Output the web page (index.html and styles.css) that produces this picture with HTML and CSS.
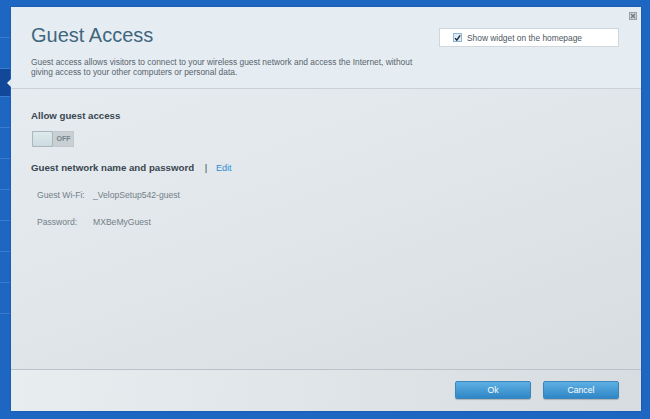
FILE: index.html
```html
<!DOCTYPE html>
<html lang="en">
<head>
    <meta charset="UTF-8">
    <title>Guest Access</title>
    <link rel="stylesheet" href="styles.css">
</head>
<body>
    <div class="page">
        <nav class="sidebar">
            <div class="nav-item"></div>
            <div class="nav-item"></div>
            <div class="nav-item active"></div>
            <div class="nav-item"></div>
            <div class="nav-item"></div>
            <div class="nav-item"></div>
            <div class="nav-item"></div>
            <div class="nav-item"></div>
            <div class="nav-item"></div>
            <div class="nav-item"></div>
        </nav>

        <div class="modal">
            <button class="close" aria-label="Close">
                <svg width="8" height="8" viewBox="0 0 8 8"><rect x="0.5" y="0.5" width="7" height="7" fill="#c9d1d6" stroke="#98a3aa"/><path d="M2 2L6 6M6 2L2 6" stroke="#6d7a83" stroke-width="1.2"/></svg>
            </button>

            <header class="modal-header">
                <div class="intro">
                    <h1>Guest Access</h1>
                    <p>Guest access allows visitors to connect to your wireless guest network and access the Internet, without giving access to your other computers or personal data.</p>
                </div>
                <label class="widget-box">
                    <span class="check">
                        <svg width="10" height="10" viewBox="0 0 10 10"><path d="M1.5 5.2L4 8L8.8 1.2" fill="none" stroke="#1b2530" stroke-width="2"/></svg>
                    </span>
                    Show widget on the homepage
                </label>
            </header>

            <section class="modal-body">
                <h2>Allow guest access</h2>
                <div class="toggle">
                    <span class="knob"></span>
                    <span class="toggle-text">OFF</span>
                </div>

                <h2 class="net-title">Guest network name and password <span class="sep">|</span> <a href="#" class="edit">Edit</a></h2>
                <div class="field"><span class="field-label">Guest Wi-Fi:</span><span>_VelopSetup542-guest</span></div>
                <div class="field"><span class="field-label">Password:</span><span>MXBeMyGuest</span></div>
            </section>

            <footer class="modal-footer">
                <button class="btn">Ok</button>
                <button class="btn">Cancel</button>
            </footer>
        </div>
    </div>
</body>
</html>
```

FILE: styles.css
```css
:root {
    --blue: #1d66c2;
    --blue-dark: #12489a;
    --title: #40667f;
    --text: #56636d;
    --label: #747f87;
    --heading: #3a4650;
    --link: #2e8bd3;
}
body {
    margin: 0;
    background-color: var(--blue);
    font-family: "Liberation Sans", Arial, sans-serif;
    overflow: hidden;
}
.page {
    display: flex;
    height: 419px;
    padding-top: 7px;
    box-sizing: border-box;
}
.sidebar {
    width: 10px;
    flex: none;
    margin-right: 1px;
    display: flex;
    flex-direction: column;
}
.nav-item {
    height: 30px;
    border-bottom: 1px solid #3b7bd0;
    position: relative;
}
.nav-item.active { background-color: var(--blue-dark); height: 27px; }
.nav-item.active::after {
    content: "";
    position: absolute;
    right: -1px;
    top: 10px;
    border: 4px solid transparent;
    border-right-color: #f0f4f7;
}

.modal {
    position: relative;
    width: 630px;
    height: 404px;
    display: flex;
    flex-direction: column;
    background: linear-gradient(160deg, #e7edf1 0%, #e1e7eb 45%, #d5dbdf 100%);
    border-radius: 2px;
    box-shadow: 0 0 2px rgba(0, 0, 0, 0.25);
}
.close {
    position: absolute;
    top: 5px;
    right: 4px;
    padding: 0;
    border: 0;
    background: none;
    line-height: 0;
}

.modal-header {
    height: 82px;
    box-sizing: border-box;
    display: flex;
    justify-content: space-between;
    align-items: flex-start;
    padding: 16px 22px 0 20px;
    background-color: #e6edf2;
    border-bottom: 1px solid #c9d1d7;
}
.intro { width: 400px; }
.intro h1 {
    margin: 0 0 9px;
    font-size: 20px;
    line-height: 25px;
    font-weight: normal;
    color: var(--title);
}
.intro p {
    margin: 0;
    font-size: 8.4px;
    line-height: 10px;
    color: var(--text);
}
.widget-box {
    margin-top: 5px;
    width: 180px;
    height: 19px;
    box-sizing: border-box;
    display: flex;
    align-items: center;
    gap: 5px;
    padding-left: 13px;
    background-color: #fff;
    border: 1px solid #cfd7dd;
    font-size: 8.4px;
    color: #4c5760;
}
.check {
    width: 9px;
    height: 9px;
    box-sizing: border-box;
    border: 1px solid #8fb6d6;
    background-color: #dcebf6;
    display: flex;
    align-items: center;
    justify-content: center;
    line-height: 0;
}

.modal-body {
    flex: 1;
    padding: 21px 20px 0;
}
.modal-body h2 {
    margin: 0;
    font-size: 9.7px;
    line-height: 12px;
    font-weight: bold;
    color: var(--heading);
}
.toggle {
    margin: 9px 0 0 1px;
    width: 42px;
    height: 16px;
    display: flex;
    background-color: #c8d0d4;
    border-radius: 1px;
    box-shadow: inset 0 0 1px rgba(0, 0, 0, 0.3);
}
.knob {
    width: 21px;
    height: 16px;
    box-sizing: border-box;
    background: linear-gradient(#dde9ec, #ccdce1);
    border: 1px solid #a9b6bc;
    border-radius: 2px;
}
.toggle-text {
    flex: 1;
    text-align: center;
    font-size: 7px;
    font-weight: bold;
    line-height: 16px;
    color: #78838a;
}
.modal-body .net-title { margin-top: 15px; margin-bottom: 16px; }
.sep { margin: 0 6px 0 8px; font-weight: normal; }
.edit {
    color: var(--link);
    text-decoration: none;
    font-weight: normal;
    font-size: 9px;
}
.field {
    display: flex;
    padding-left: 6px;
    font-size: 8.6px;
    line-height: 10px;
    color: var(--label);
    margin-bottom: 17px;
}
.field-label { width: 56px; }

.modal-footer {
    height: 42px;
    box-sizing: border-box;
    display: flex;
    justify-content: flex-end;
    align-items: flex-start;
    gap: 12px;
    padding: 11px 22px 0;
    border-top: 1px solid #b9c2c8;
    background: linear-gradient(100deg, #e8edf0, #d6dcdf);
}
.btn {
    width: 76px;
    height: 18px;
    padding: 0;
    border: 1px solid #3a86bf;
    border-radius: 2px;
    background: linear-gradient(#5eb0e3, #2f86c6);
    color: #fff;
    font-family: "Liberation Sans", Arial, sans-serif;
    font-size: 8.6px;
    box-shadow: 0 1px 1px rgba(0, 0, 0, 0.2);
}
```
